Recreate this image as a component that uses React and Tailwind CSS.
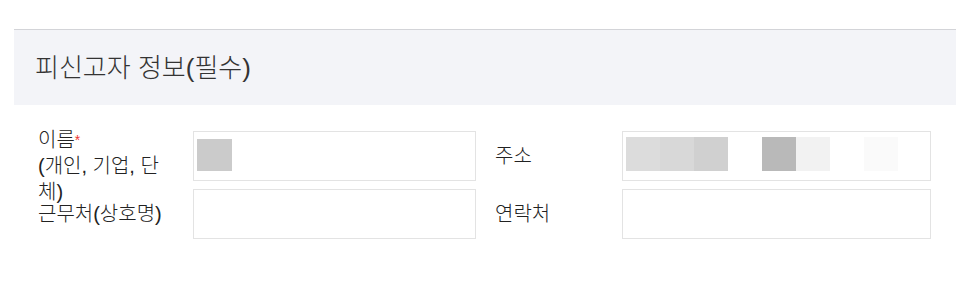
import React from "react";

const font = { fontFamily: '"Liberation Sans", "Noto Sans CJK KR", sans-serif' };

function Block({ c }) {
  return <div className={`h-[34px] w-[34px] ${c}`} />;
}

export default function App() {
  return (
    <div className="w-[966px] h-[281px] bg-white pt-[29px] font-light" style={font}>
      <div className="ml-[14px] w-[942px]">
        <div className="h-[76px] border-t border-[#d3d4d8] bg-[#f3f4f8] flex items-center pl-[21px]">
          <h2 className="text-[26px] text-[#333] leading-none font-light">피신고자 정보(필수)</h2>
        </div>
        <div className="mt-[26px] pl-[24px] grid grid-cols-[155px_283px_146px_309px] gap-y-[8px] text-[20px] text-[#222]">
          <div className="h-[50px] leading-[26px] -mt-[4px] pr-[22px]">
            이름<span className="text-[#e33] text-[14px] align-top">*</span>
            <br />
            (개인, 기업, 단체)
          </div>
          <div className="h-[50px] border border-[#e3e3e3] pl-[3px] pt-[7px]">
            <div className="h-[32px] w-[35px] bg-[#cbcbcb]" />
          </div>
          <div className="h-[50px] flex items-center pl-[19px]">주소</div>
          <div className="h-[50px] border border-[#e3e3e3] pl-[3px] pt-[5px] flex items-start">
            <Block c="bg-[#dcdcdc]" />
            <Block c="bg-[#d8d8d8]" />
            <Block c="bg-[#d0d0d0]" />
            <Block c="bg-white" />
            <Block c="bg-[#b9b9b9]" />
            <Block c="bg-[#f2f2f2]" />
            <Block c="bg-white" />
            <Block c="bg-[#fafafa]" />
          </div>
          <div className="h-[50px] flex items-center">근무처(상호명)</div>
          <div className="h-[50px] border border-[#e3e3e3]" />
          <div className="h-[50px] flex items-center pl-[19px]">연락처</div>
          <div className="h-[50px] border border-[#e3e3e3]" />
        </div>
      </div>
    </div>
  );
}
